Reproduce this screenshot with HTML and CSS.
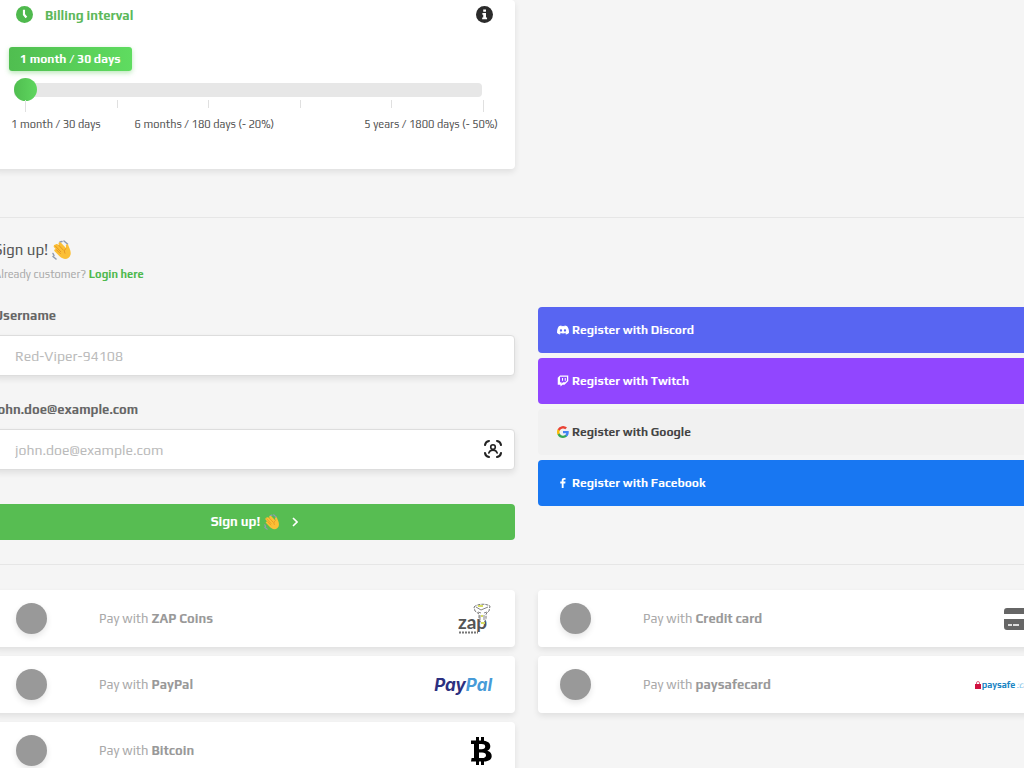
FILE: index.html
```html
<!DOCTYPE html>
<html lang="en">
<head>
    <meta charset="UTF-8">
    <meta name="viewport" content="width=device-width, initial-scale=1">
    <title>Sign up</title>
    <link rel="stylesheet" href="styles.css">
</head>
<body>
<svg class="defs" aria-hidden="true">
    <symbol id="wave" viewBox="0 0 20 20">
        <path d="M1 16.500l3 2.500M1 13.500l1 2M12 1l3.500 3M10 1.500l-2 .5" fill="none" stroke="#8f9bb0" stroke-width="1.500" stroke-linecap="round"/>
        <path d="M3.500 4.500c1-.9 2-.5 2.700.2L7 5.500l-.5-2c0-1.400 1.900-1.700 2.700-.6l5 5.300-.4-3c.2-1.500 2.300-1.400 2.600.2.500 2 2.500 4.500 2.300 8-.2 3.600-2.900 5.600-5.700 5.600-2.600 0-4.600-1.700-6.200-3.400L2.600 11.300c-1-1.200.2-2.500 1.500-1.900L2 7.200c-.9-1.300.3-2.500 1.500-2.700z" fill="#fbbf35"/>
        <path d="M3.300 6l5.500 5.800M6.700 5.200l4.700 5M4.500 9.700l4 4M14.200 8.200c-1.900 1.300-2.300 3-1.300 5" fill="none" stroke="#e08b20" stroke-width=".8" stroke-linecap="round"/>
    </symbol>
</svg>

<main class="page">
    <div class="columns">
        <section class="card billing">
            <div class="billing-head">
                <svg class="icon-round" viewBox="0 0 16 16">
                    <circle cx="8" cy="8" r="8" fill="#4fb94e"/>
                    <path d="M7.500 3.500V8l2.300 2.800" fill="none" stroke="#fff" stroke-width="2"/>
                </svg>
                <label class="billing-title" for="interval">Billing interval</label>
                <svg class="icon-round" viewBox="0 0 16 16">
                    <circle cx="8" cy="8" r="8" fill="#2b2b2b"/>
                    <path d="M6.800 3.300h2.600v2.200H6.800zM6 6.600h3.400v4.200h1V12.400H5.800v-1.600h1V8.200H6z" fill="#fff"/>
                </svg>
            </div>
            <output class="bubble" for="interval">1 month / 30 days</output>
            <input class="slider" id="interval" type="range" min="0" max="5" value="0">
            <div class="ticks"><i></i><i></i><i></i><i></i><i></i><i></i></div>
            <div class="tick-labels">
                <span>1 month / 30 days</span>
                <span>6 months / 180 days (- 20%)</span>
                <span>5 years / 1800 days (- 50%)</span>
            </div>
        </section>
    </div>

    <hr>

    <h2>Sign up! <svg class="wave-big"><use href="#wave"/></svg></h2>
    <p class="already">Already customer? <a href="#">Login here</a></p>

    <div class="columns">
        <form class="signup">
            <label for="username">Username</label>
            <div class="field">
                <input id="username" type="text" placeholder="Red-Viper-94108">
            </div>
            <label for="email">john.doe@example.com</label>
            <div class="field">
                <input id="email" type="email" placeholder="john.doe@example.com">
                <svg class="scan" viewBox="0 0 18 18" fill="none" stroke="#222" stroke-width="2" stroke-linecap="round">
                    <path d="M1 5C1.300 3 3 1.300 5 1M13 1C15 1.300 16.700 3 17 5M17 13c-.3 2-2 3.700-4 4M5 17C3 16.700 1.300 15 1 13"/>
                    <circle cx="9" cy="7" r="2.300" stroke-width="1.600"/>
                    <path d="M4.800 13c.7-2 2.300-2.900 4.200-2.900s3.500.9 4.200 2.900" stroke-width="1.600"/>
                </svg>
            </div>
            <button type="submit" class="btn-signup">
                Sign up!
                <svg class="wave-small"><use href="#wave"/></svg>
                <svg class="chevron" viewBox="0 0 6 10"><path d="M1 1l4 4-4 4" fill="none" stroke="#fff" stroke-width="1.600"/></svg>
            </button>
        </form>

        <div class="socials">
            <button class="social discord">
                <svg viewBox="0 0 24 24" fill="#fff"><path fill-rule="evenodd" d="M20.300 4.400A19.800 19.800 0 0 0 15.400 3l-.7 1.300a18 18 0 0 0-5.400 0L8.600 3a19.700 19.700 0 0 0-4.900 1.400C.5 9 0 13.600.1 18.100a20 20 0 0 0 6 3l1.300-2-1.900-1 .5-.4a14.200 14.200 0 0 0 12 0l.5.400-1.900 1 1.300 2a19.800 19.800 0 0 0 6-3c.5-5.200-.8-9.700-3.600-13.700zM8 15.300c-1.200 0-2.200-1.100-2.200-2.400S6.800 10.500 8 10.500s2.200 1.100 2.200 2.400-1 2.400-2.200 2.400zm8 0c-1.200 0-2.200-1.100-2.200-2.400s1-2.400 2.200-2.400 2.200 1.100 2.200 2.400-1 2.400-2.200 2.400z"/></svg>
                Register with Discord
            </button>
            <button class="social twitch">
                <svg viewBox="0 0 24 24" fill="#fff"><path fill-rule="evenodd" d="M6 1L1.500 5.500v14H7V23l4-3.500h4l7.500-7.500V1zm14 10l-3.500 3.500H12L9 17.500v-3H6V3.500h14zM17.500 6v5.500h-2V6zm-5.500 0v5.500h-2V6z"/></svg>
                Register with Twitch
            </button>
            <button class="social google">
                <svg viewBox="0 0 24 24">
                    <path fill="#4285f4" d="M23.500 12.300c0-.8-.1-1.600-.2-2.300H12v4.500h6.500a5.500 5.500 0 0 1-2.400 3.600v3h3.900c2.200-2.100 3.500-5.200 3.500-8.800z"/>
                    <path fill="#34a853" d="M12 24c3.200 0 6-1.100 8-2.900l-3.900-3c-1.100.7-2.500 1.200-4.100 1.200-3.100 0-5.800-2.100-6.700-5H1.300v3.100A12 12 0 0 0 12 24z"/>
                    <path fill="#fbbc05" d="M5.300 14.300a7.200 7.200 0 0 1 0-4.600V6.600h-4a12 12 0 0 0 0 10.800z"/>
                    <path fill="#ea4335" d="M12 4.800c1.800 0 3.300.6 4.600 1.800L20 3.200A12 12 0 0 0 1.300 6.600l4 3.100c.9-2.900 3.600-4.900 6.700-4.900z"/>
                </svg>
                Register with Google
            </button>
            <button class="social facebook">
                <svg viewBox="0 0 24 24" fill="#fff"><path d="M9.500 22v-9H6.500V9.200h3V6.500C9.500 3.400 11.400 2 14.200 2c1.300 0 2.300.1 2.800.2v3.300h-2c-1.500 0-1.800.8-1.800 1.900v1.800H17l-.5 3.800h-3.300v9z"/></svg>
                Register with Facebook
            </button>
        </div>
    </div>

    <hr class="hr-payments">

    <div class="columns payments">
        <label class="card method">
            <input type="radio" name="payment">
            <span>Pay with <b>ZAP Coins</b></span>
            <svg class="logo-zap" viewBox="0 0 34 32">
                <text class="zap-word" x="0" y="26">zap</text>
                <path d="M1 29.500h19" stroke="#777" stroke-width="2" stroke-dasharray="2 1"/>
                <path d="M16 4c3-3 11-4 16-1l-1 5-3 3v5l-2 4h-3l-2-4v-5l-4-3z" fill="#fff" stroke="#777" stroke-width="1" stroke-dasharray="3 1"/>
                <path d="M18 4l5 3 7-3M20 9l3 1M26 10l3-1M22 12v5M26 12v5" fill="none" stroke="#666" stroke-width=".8"/>
                <path d="M20 3h5M23 13h2M23 20h4" stroke="#d7dc62" stroke-width="2"/>
            </svg>
        </label>
        <label class="card method">
            <input type="radio" name="payment">
            <span>Pay with <b>Credit card</b></span>
            <svg class="logo-card" viewBox="0 0 32 22">
                <path d="M3 0h26a3 3 0 0 1 3 3v3H0V3a3 3 0 0 1 3-3zM0 11h32v8a3 3 0 0 1-3 3H3a3 3 0 0 1-3-3z" fill="#666"/>
                <path d="M4 17h4M9 17h6" stroke="#ddd" stroke-width="2"/>
            </svg>
        </label>
        <label class="card method">
            <input type="radio" name="payment">
            <span>Pay with <b>PayPal</b></span>
            <span class="logo-paypal"><i>Pay</i>Pal</span>
        </label>
        <label class="card method">
            <input type="radio" name="payment">
            <span>Pay with <b>paysafecard</b></span>
            <span class="logo-paysafe">
                <svg viewBox="0 0 6 8"><path d="M1.500 3V2a1.500 1.500 0 0 1 3 0v1" fill="none" stroke="#e0607f"/><path d="M0 3h6v5H0z" fill="#d0113f"/></svg>
                <b>paysafe</b><i>:card</i>
            </span>
        </label>
        <label class="card method">
            <input type="radio" name="payment">
            <span>Pay with <b>Bitcoin</b></span>
            <svg class="logo-bitcoin" viewBox="0 0 21 28">
                <path fill-rule="evenodd" d="M0 3.500h5V0h3v3.500h2V0h3v3.700c4 .5 6.300 2.500 6.300 5.600 0 2.100-1 3.600-3 4.400 2.900.8 4.400 2.600 4.400 5.200 0 3.400-2.700 5.300-7.700 5.600V28h-3v-3.500H8V28H5v-3.500H0l.6-3.500H3V7H0zM8 7v5.300h2.600c2.400 0 3.600-.9 3.600-2.700S13 7 10.600 7zm0 8.500V21h3c2.700 0 4-.9 4-2.800s-1.300-2.700-4-2.700z"/>
            </svg>
        </label>
    </div>
</main>
</body>
</html>
```
FILE: styles.css
```css
* {
    box-sizing: border-box;
}

body {
    margin: 0;
    overflow: hidden;
    background: #f5f5f5;
    color: #555;
    font-family: Play, "Open Sans", "Noto Sans", sans-serif;
    font-size: 13px;
    line-height: 18px;
}

.defs {
    display: none;
}

/* the page runs a little past both sides of the window */
.page {
    margin: 0 -35px 0 -6px;
}

.columns {
    display: grid;
    grid-template-columns: 1fr 1fr;
    column-gap: 23px;
}

.card {
    background: #fff;
    border-radius: 4px;
    box-shadow: 0 3px 6px rgba(0, 0, 0, 0.09);
}

hr {
    margin: 48px 0 20px;
    border: 0;
    border-top: 1px solid #e6e6e6;
}

/* billing */
.billing {
    padding: 6px 15px 36px;
}

.billing-head {
    display: flex;
    align-items: flex-start;
    gap: 12px;
    padding: 0 7px;
}

.billing-title {
    flex: 1;
    padding-top: 1px;
    color: #5cb85a;
    font-weight: bold;
}

.icon-round {
    width: 17px;
    height: 17px;
}

.bubble {
    display: block;
    width: max-content;
    margin-top: 22px;
    padding: 3px 11px;
    border-radius: 3px;
    background: linear-gradient(90deg, #50be50, #5fdc60);
    box-shadow: 0 2px 5px rgba(83, 194, 81, 0.4);
    color: #fff;
    font-size: 12px;
    font-weight: bold;
}

.slider {
    display: block;
    width: calc(100% - 23px);
    height: 24px;
    margin: 7px 5px 0;
    appearance: none;
    background: none;
}

.slider::-webkit-slider-runnable-track {
    height: 14px;
    border-radius: 4px;
    background: #e7e7e7;
}

.slider::-webkit-slider-thumb {
    appearance: none;
    width: 23px;
    height: 23px;
    margin-top: -5px;
    border-radius: 50%;
    background: linear-gradient(90deg, #50be50, #5fd65f);
}

.ticks {
    display: flex;
    justify-content: space-between;
    height: 12px;
    margin: -2px 16px 0;
}

.ticks i {
    width: 1px;
    height: 8px;
    background: #e0e0e0;
}

.ticks i:first-child,
.ticks i:last-child {
    height: 12px;
}

.tick-labels {
    display: flex;
    gap: 34px;
    margin: 3px 2px 0;
    font-size: 11px;
}

.tick-labels span:last-child {
    margin-left: auto;
}

/* sign up */
h2 {
    display: flex;
    align-items: center;
    gap: 4px;
    margin: 0;
    font-size: 15px;
    font-weight: normal;
    line-height: 24px;
}

.wave-big {
    width: 20px;
    height: 20px;
}

.already {
    margin: 3px 0 24px;
    color: #aaa;
    font-size: 11px;
}

.already a {
    color: #4fb94e;
    font-weight: bold;
    text-decoration: none;
}

.signup label {
    display: block;
    margin-bottom: 10px;
    color: #666;
    font-weight: bold;
}

.field {
    position: relative;
    margin-bottom: 25px;
}

.field input {
    display: block;
    width: 100%;
    height: 41px;
    padding: 0 20px;
    border: 1px solid #ddd;
    border-radius: 4px;
    background: #fff;
    box-shadow: 0 3px 6px rgba(0, 0, 0, 0.09);
    font: inherit;
    font-size: 14px;
}

.field input::placeholder {
    color: #bbb;
}

.scan {
    position: absolute;
    top: 11px;
    right: 13px;
    width: 18px;
    height: 18px;
}

.btn-signup {
    display: flex;
    align-items: center;
    justify-content: center;
    gap: 4px;
    width: 100%;
    height: 36px;
    margin-top: 34px;
    border: 0;
    border-radius: 4px;
    background: #57bd52;
    color: #fff;
    font: inherit;
    font-weight: bold;
}

.wave-small {
    width: 16px;
    height: 16px;
}

.chevron {
    width: 6px;
    height: 10px;
    margin-left: 8px;
}

.socials {
    display: flex;
    flex-direction: column;
    gap: 5px;
}

.social {
    display: flex;
    align-items: center;
    gap: 3px;
    height: 46px;
    padding: 0 19px;
    border: 0;
    border-radius: 4px;
    color: #fff;
    font: inherit;
    font-size: 12px;
    font-weight: bold;
}

.social svg {
    width: 12px;
    height: 12px;
}

.discord { background: #5865f2; }
.twitch { background: #9146ff; }
.google { background: #f1f1f1; color: #444; }
.facebook { background: #1877f2; }

/* payments */
.hr-payments {
    margin: 24px 0 25px;
}

.payments {
    row-gap: 9px;
}

.method {
    display: flex;
    align-items: center;
    height: 57px;
    padding: 0 23px 0 22px;
    color: #aaa;
}

.method b {
    color: #999;
}

.method input {
    appearance: none;
    width: 31px;
    height: 31px;
    margin: 0 52px 0 0;
    border-radius: 50%;
    background: #999;
    box-shadow: 0 3px 6px rgba(0, 0, 0, 0.1);
}

.method > :last-child {
    margin-left: auto;
}

.logo-zap {
    width: 34px;
    height: 32px;
}

.zap-word {
    fill: #555;
    font-family: Lato, sans-serif;
    font-size: 19px;
    font-weight: bold;
}

.logo-card {
    width: 32px;
    height: 22px;
}

.logo-paypal {
    color: #479bd8;
    font-family: Inter, sans-serif;
    font-size: 17px;
    font-style: italic;
    font-weight: bold;
}

.logo-paypal i {
    color: #2c3080;
}

.logo-paysafe {
    display: flex;
    align-items: center;
    gap: 1px;
    font-size: 9px;
}

.logo-paysafe svg {
    width: 6px;
    height: 8px;
}

.method .logo-paysafe b {
    color: #1c86c4;
}

.logo-paysafe i {
    color: #7fc4e8;
}

.logo-bitcoin {
    width: 21px;
    height: 28px;
}
```
